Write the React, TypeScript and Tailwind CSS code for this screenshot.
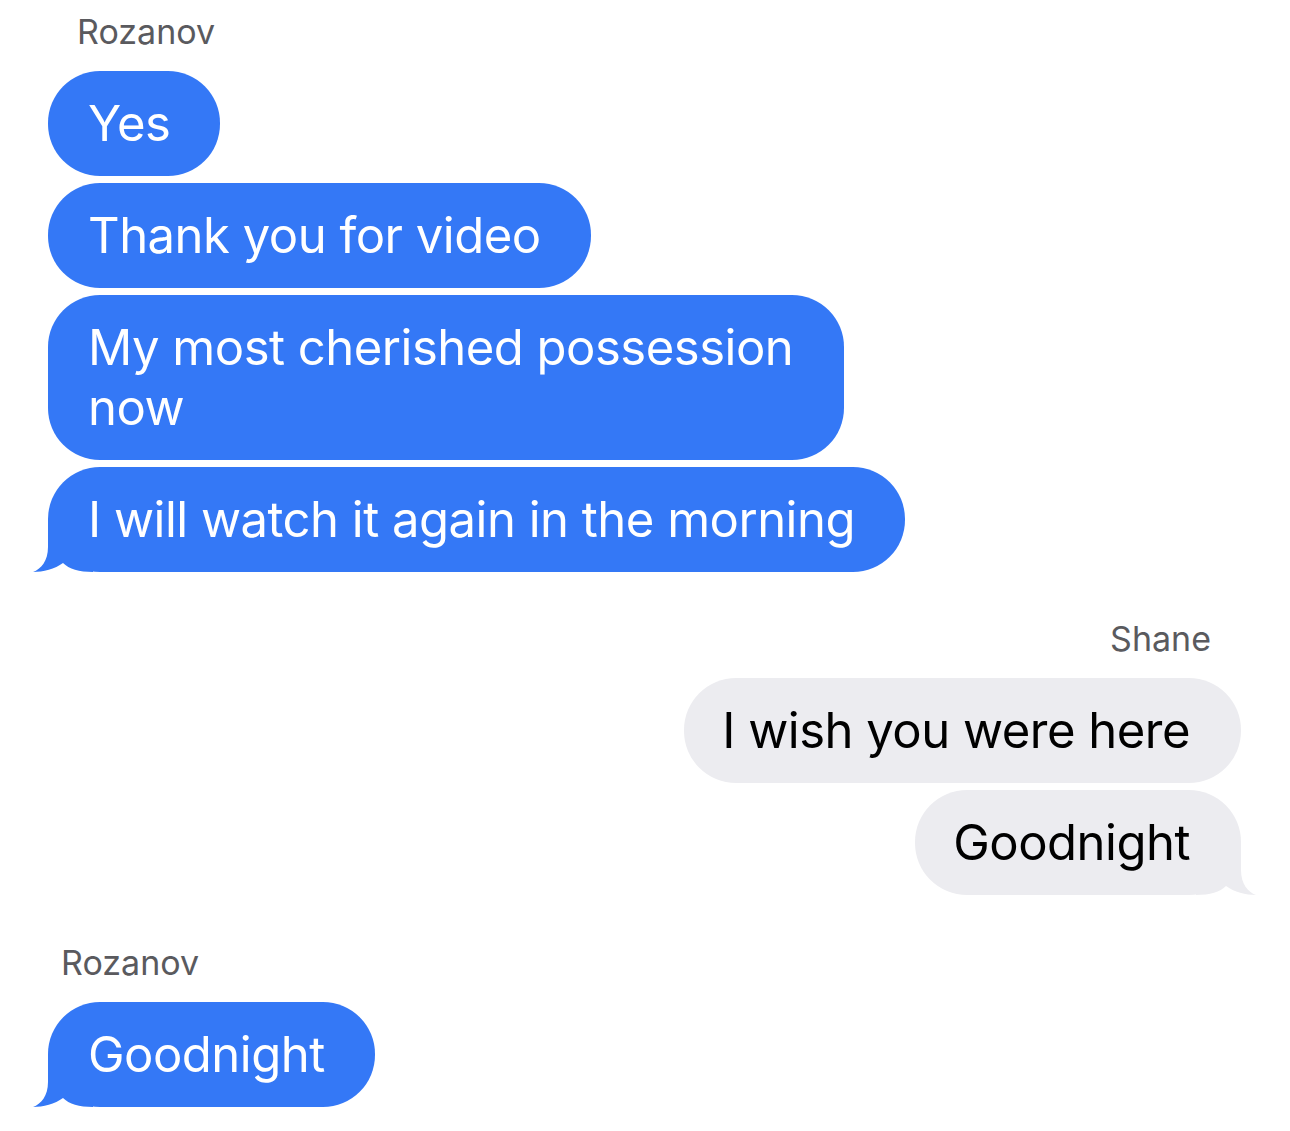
import React from 'react'

type Side = 'in' | 'out'

const Tail = ({ side }: { side: Side }) =>
  side === 'in' ? (
    <svg className="absolute left-[-15px] bottom-0" width="60" height="53" viewBox="0 0 60 53">
      <path d="M15 0 L15 28 C15 42 8 50 0 53 C10 53 22 50 30 44 C36 50 46 53 60 53 L60 0 Z" fill="#3478f6" />
    </svg>
  ) : (
    <svg className="absolute right-[-15px] bottom-0" width="60" height="53" viewBox="0 0 60 53">
      <path d="M45 0 L45 28 C45 42 52 50 60 53 C50 53 38 50 30 44 C24 50 14 53 0 53 L0 0 Z" fill="#ececf0" />
    </svg>
  )

const Bubble = ({ text, side, tail, narrow }: { text: string; side: Side; tail?: boolean; narrow?: boolean }) => (
  <div
    className={
      (side === 'in'
        ? 'relative self-start rounded-[52px] bg-[#3478f6] text-white pl-[40px] pr-[50px] pt-[23px] pb-[22px]'
        : 'relative self-end rounded-[52px] bg-[#ececf0] text-black pl-[38px] pr-[51px] pt-[23px] pb-[22px]') +
      (narrow ? ' max-w-[796px]' : ' max-w-[878px]')
    }
  >
    {tail && <Tail side={side} />}
    <span className="relative text-[49px] leading-[60px] tracking-[-0.5px]">{text}</span>
  </div>
)

const Label = ({ name, className }: { name: string; className: string }) => (
  <div className={`text-[34px] leading-[40px] text-[#5a5a5e] mb-[19px] ${className}`}>{name}</div>
)

export default function App() {
  return (
    <div className="min-h-screen bg-white font-['Inter',sans-serif] pt-[12px] pl-[48px] pr-[49px]">
      {/* Rozanov */}
      <div className="flex flex-col">
        <Label name="Rozanov" className="pl-[29px]" />
        <div className="flex flex-col gap-[7px]">
          <Bubble side="in" text="Yes" />
          <Bubble side="in" text="Thank you for video" />
          <Bubble side="in" text="My most cherished possession now" narrow />
          <Bubble side="in" text="I will watch it again in the morning" tail />
        </div>
      </div>

      {/* Shane */}
      <div className="flex flex-col mt-[47px]">
        <Label name="Shane" className="self-end pr-[30px]" />
        <div className="flex flex-col gap-[7px]">
          <Bubble side="out" text="I wish you were here" />
          <Bubble side="out" text="Goodnight" tail />
        </div>
      </div>

      {/* Rozanov */}
      <div className="flex flex-col mt-[48px]">
        <Label name="Rozanov" className="pl-[13px]" />
        <div className="flex flex-col">
          <Bubble side="in" text="Goodnight" tail />
        </div>
      </div>
    </div>
  )
}
